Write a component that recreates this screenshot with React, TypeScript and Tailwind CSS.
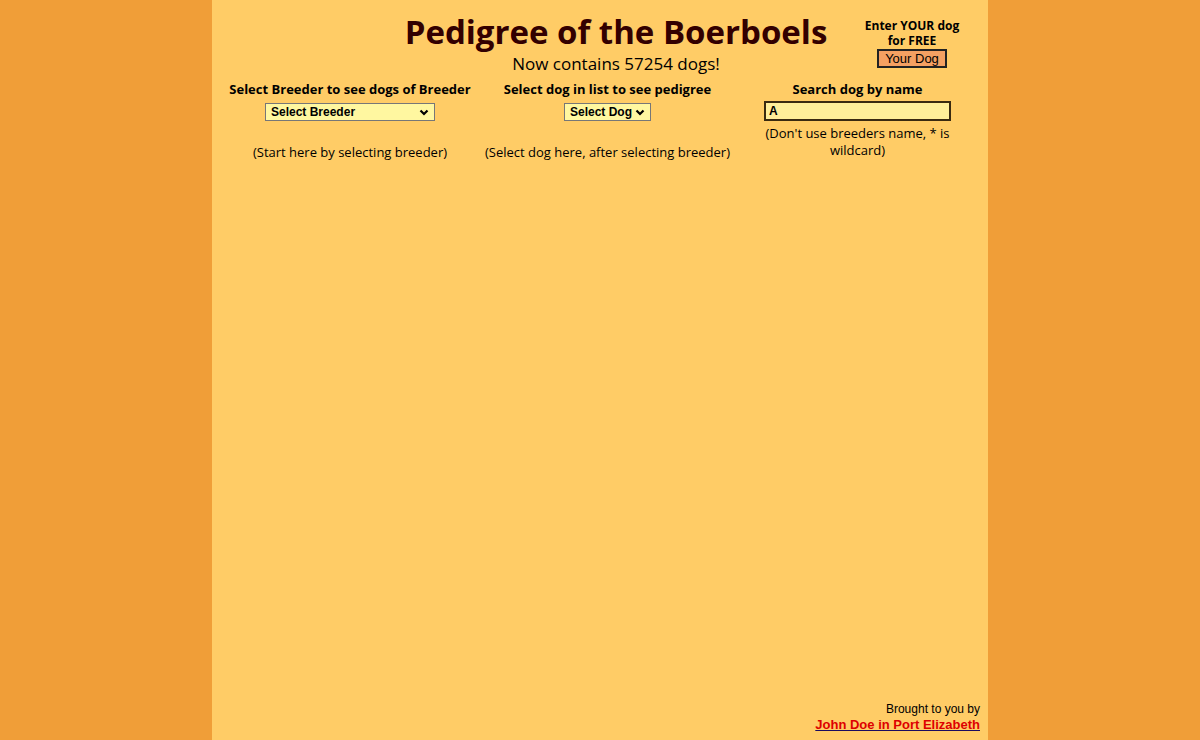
function Chevron() {
  return (
    <svg
      viewBox="0 0 10 10"
      className="pointer-events-none absolute right-[6px] top-1/2 h-[10px] w-[10px] -translate-y-1/2"
      fill="none"
      stroke="#000"
      strokeWidth="2.2"
    >
      <path d="M1.5 3.5 5 7l3.5-3.5" />
    </svg>
  );
}

function FakeSelect({ label, width }: { label: string; width: string }) {
  return (
    <div className={`relative mt-[4px] ${width}`}>
      <select
        className="h-[18px] w-full appearance-none border border-[#777] bg-[#fff7a0] pl-[5px] pr-[18px] text-[12px] font-bold leading-[14px] outline-none"
        style={{ fontFamily: '"Liberation Sans", Arial, sans-serif' }}
      >
        <option>{label}</option>
      </select>
      <Chevron />
    </div>
  );
}

export default function App() {
  const sans = { fontFamily: '"Open Sans", "Noto Sans", sans-serif' };
  return (
    <div className="flex min-h-[740px] justify-center bg-[#f09e38]">
      <div className="flex w-[776px] flex-col bg-[#ffcc66] text-black" style={sans}>
        <header className="flex px-[10px] pt-[13px]">
          <div className="w-[164px] shrink-0" />
          <div className="flex flex-1 flex-col items-center">
            <h1 className="text-[33px] font-bold leading-[38px] text-[#330000]">
              Pedigree of the Boerboels
            </h1>
            <div className="mt-[3px] text-[17px] leading-[20px]">Now contains 57254 dogs!</div>
          </div>
          <div className="flex w-[132px] shrink-0 flex-col items-center pt-[5px] text-[12px] font-bold leading-[15px]">
            <div>Enter YOUR dog</div>
            <div>for FREE</div>
            <button
              className="mt-[1px] h-[19px] border-2 border-[#222] bg-[#f4a062] px-[6px] text-[13px] font-normal leading-[14px]"
              style={{ fontFamily: '"Liberation Sans", Arial, sans-serif' }}
            >
              Your Dog
            </button>
          </div>
        </header>

        <div className="mt-[6px] grid grid-cols-[256px_259px_241px] px-[10px] text-[13px]">
          <div className="flex flex-col items-center">
            <div className="font-bold leading-[18px]">Select Breeder to see dogs of Breeder</div>
            <FakeSelect label="Select Breeder" width="w-[170px]" />
            <div className="mt-[21px] leading-[18px]">(Start here by selecting breeder)</div>
          </div>
          <div className="flex flex-col items-center">
            <div className="font-bold leading-[18px]">Select dog in list to see pedigree</div>
            <FakeSelect label="Select Dog" width="w-[87px]" />
            <div className="mt-[21px] leading-[18px]">(Select dog here, after selecting breeder)</div>
          </div>
          <div className="flex flex-col items-center">
            <div className="font-bold leading-[18px]">Search dog by name</div>
            <input
              defaultValue="A"
              className="mt-[3px] h-[20px] w-[187px] border-2 border-[#3a2a10] bg-[#ffee99] px-[3px] text-[12px] font-bold leading-[14px] outline-none"
              style={{ fontFamily: '"Liberation Sans", Arial, sans-serif' }}
            />
            <div className="mt-[4px] w-[200px] text-center leading-[17px]">
              (Don't use breeders name, * is wildcard)
            </div>
          </div>
        </div>

        <footer
          className="mt-auto flex flex-col items-end px-[8px] pb-[8px] text-[12px] leading-[15px]"
          style={{ fontFamily: '"Liberation Sans", Arial, sans-serif' }}
        >
          <div>Brought to you by</div>
          <a href="#" className="text-[13px] font-bold text-[#dd0000] underline decoration-[#1a0a60]">
            John Doe in Port Elizabeth
          </a>
        </footer>
      </div>
    </div>
  );
}
